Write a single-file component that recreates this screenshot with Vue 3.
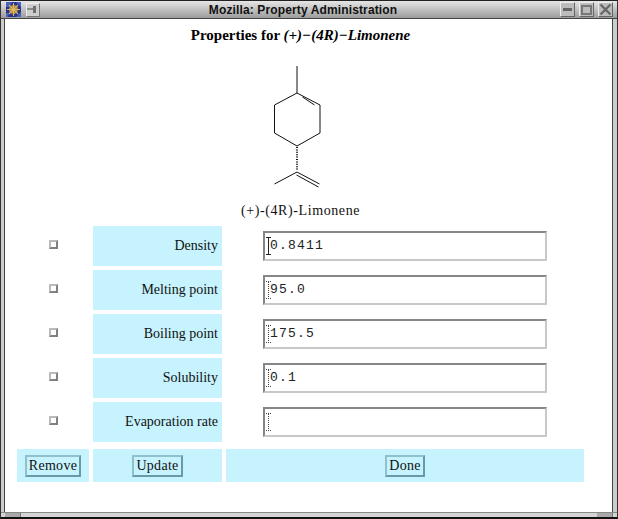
<script setup>
const rows = [
  { label: 'Density', value: '0.8411', solid: true },
  { label: 'Melting point', value: '95.0' },
  { label: 'Boiling point', value: '175.5' },
  { label: 'Solubility', value: '0.1' },
  { label: 'Evaporation rate', value: '' },
]
</script>

<template>
  <div class="window">
    <header class="titlebar">
      <svg class="app-icon" width="15" height="15" viewBox="0 0 15 15">
        <rect width="15" height="15" fill="#26348c" />
        <path d="M0 0h6L3 5H0zM10 0h5v5zM0 11l3 0-1 4H0zM15 10v5h-5z" fill="#4a62c0" />
        <circle cx="7.5" cy="7.5" r="4.6" fill="#b88a40" />
        <circle cx="7.5" cy="7.5" r="2" fill="#5a3418" />
        <path d="M7.5 1v13M1 7.5h13M3 3l9 9M12 3l-9 9" stroke="#d8b868" stroke-width="1.1" />
      </svg>
      <div class="pin">
        <svg width="12" height="9" viewBox="0 0 12 9"><path d="M0 4h6" stroke="#777" stroke-width="1.5" /><path d="M6 1h3v7H6z" fill="#6e6e6e" /></svg>
      </div>
      <div class="title">Mozilla: Property Administration</div>
      <div class="ctl"><span class="min"></span></div>
      <div class="ctl"><span class="max"></span></div>
      <div class="ctl">
        <svg width="13" height="13" viewBox="0 0 13 13"><path d="M1.5 1.5l10 10M11.5 1.5l-10 10" stroke="#666" stroke-width="2.2" /></svg>
      </div>
    </header>

    <main class="body">
      <h1 class="heading">Properties for <em>(+)−(4R)−Limonene</em></h1>
      <svg class="molecule" width="140" height="135" viewBox="230.5 55 140 135">
        <g stroke="#111" stroke-width="1" fill="none">
          <path d="M296.5 67V94L319.5 106V134L296.5 147L274 134V106L296.5 94" />
          <path d="M302 98L314 106" />
          <path d="M296.5 148V172" stroke-width="2" stroke-dasharray="1 1.4" />
          <path d="M274 185L296.5 173L319 185" />
          <path d="M296 176L318 188" />
        </g>
      </svg>
      <div class="caption">(+)-(4R)-Limonene</div>

      <div class="grid">
        <template v-for="r in rows" :key="r.label">
          <div class="check-cell"><span class="check"></span></div>
          <div class="label">{{ r.label }}</div>
          <div class="field-cell">
            <div class="field">
              <span class="caret" :class="{ solid: r.solid }"></span>
              <span class="value">{{ r.value }}</span>
            </div>
          </div>
        </template>
      </div>

      <div class="actions">
        <div class="action"><button class="btn">Remove</button></div>
        <div class="action"><button class="btn">Update</button></div>
        <div class="action"><button class="btn">Done</button></div>
      </div>
    </main>
    <footer class="bottom">
      <span class="corner"></span>
      <span class="corner"></span>
    </footer>
  </div>
</template>

<style>
html, body { margin: 0; background: #fff; }
</style>

<style scoped>
.window {
  position: relative;
  width: 618px;
  height: 519px;
  box-sizing: border-box;
  display: flex;
  flex-direction: column;
  background: #fff;
  overflow: hidden;
  font-family: "Liberation Serif", serif;
  border-top: 1px solid #222;
  border-right: 1px solid #333;
  border-left: 1px solid #333;
  border-bottom: 2px solid #111;
}
.titlebar {
  height: 17px;
  flex: none;
  display: flex;
  align-items: center;
  padding: 0 4px 0 5px;
  background: linear-gradient(#e6e6e6, #9c9c9c);
  border-bottom: 1px solid #444;
  box-sizing: content-box;
}
.app-icon { flex: none; }
.pin {
  width: 12px;
  height: 12px;
  margin-left: 5px;
  display: flex;
  align-items: center;
  justify-content: center;
  background: #cdcdcd;
  border: 1px solid #eee;
  border-right-color: #777;
  border-bottom-color: #777;
}
.title {
  flex: 1;
  text-align: center;
  font: bold 12px "Liberation Sans", sans-serif;
  letter-spacing: 0.13px;
  color: #111;
  padding-left: 10px;
}
.ctl {
  width: 13px;
  height: 13px;
  margin-left: 4px;
  display: flex;
  align-items: center;
  justify-content: center;
  background: #bcbcbc;
  border: 1px solid #eee;
  border-right-color: #666;
  border-bottom-color: #666;
}
.min { width: 9px; height: 3px; background: #666; }
.max { width: 7px; height: 6px; border: 2px solid #777; }
.body {
  flex: 1;
  box-sizing: border-box;
  border-left: 3px solid #ccc;
  border-right: 4px solid #ccc;
  padding: 0 29px 0 13px;
  min-height: 0;
  box-shadow: inset 1px 0 0 #444, inset -1px 0 0 #444;
}
.heading {
  margin: 8px 0 0;
  text-align: center;
  font-size: 15px;
  line-height: 16px;
  font-weight: bold;
  color: #000;
}
.molecule {
  display: block;
  margin: 11px auto 0;
}
.caption {
  margin-top: 14px;
  text-align: center;
  font-size: 14px;
  line-height: 16px;
  letter-spacing: 0.6px;
  color: #111;
}
.grid {
  margin-top: 7px;
  display: grid;
  grid-template-columns: 72px 129px 358px;
  grid-auto-rows: 40px;
  gap: 4px;
}
.check-cell {
  display: flex;
  align-items: center;
  justify-content: center;
  padding-bottom: 4px;
  box-sizing: border-box;
}
.check {
  width: 5px;
  height: 5px;
  background: #fff;
  border: 2px solid #bbb;
  border-right-color: #808080;
  border-bottom-color: #808080;
}
.label {
  background: #c6f3fe;
  text-align: right;
  padding: 11px 4px 0 0;
  box-sizing: border-box;
  font-size: 14px;
  line-height: 18px;
  color: #111;
}
.field-cell {
  padding: 5px 0 0 37px;
}
.field {
  position: relative;
  width: 284px;
  height: 30px;
  box-sizing: border-box;
  border: 2px solid #c8c8c8;
  border-top-color: #868686;
  border-left-color: #868686;
  background: #fff;
  font: 13px/26px "Liberation Mono", monospace;
  letter-spacing: 1.2px;
  color: #222;
  padding-left: 5px;
}
.caret {
  position: absolute;
  left: 3px;
  top: 4px;
  height: 18px;
  border-left: 1px dotted #444;
}
.caret::before,
.caret::after {
  content: "";
  position: absolute;
  left: -3px;
  width: 5px;
  border-top: 1px dotted #444;
}
.caret::before { top: 0; }
.caret::after { bottom: 0; }
.caret.solid { border-left: 1px solid #222; }
.caret.solid::before,
.caret.solid::after { border-top: 1px solid #222; }
.actions {
  margin-top: 7px;
  display: grid;
  grid-template-columns: 72px 129px 358px;
  gap: 4px;
  height: 33px;
}
.action {
  background: #c6f3fe;
  display: flex;
  align-items: center;
  justify-content: center;
}
.btn {
  height: 22px;
  padding: 0 2px;
  background: #c6f3fe;
  border: 2px solid #d6f6fe;
  border-right-color: #6a9aa6;
  border-bottom-color: #6a9aa6;
  border-left-color: #8fc0cc;
  border-top-color: #8fc0cc;
  font: 14px "Liberation Serif", serif;
  letter-spacing: 0.3px;
  color: #111;
}
.bottom {
  flex: none;
  height: 4px;
  background: #d4d4d4;
  border-top: 1px solid #888;
  display: flex;
  justify-content: space-between;
  padding: 0 4px;
}
.corner {
  width: 15px;
  background: #a8a8a8;
  border-right: 1px solid #777;
}
</style>
